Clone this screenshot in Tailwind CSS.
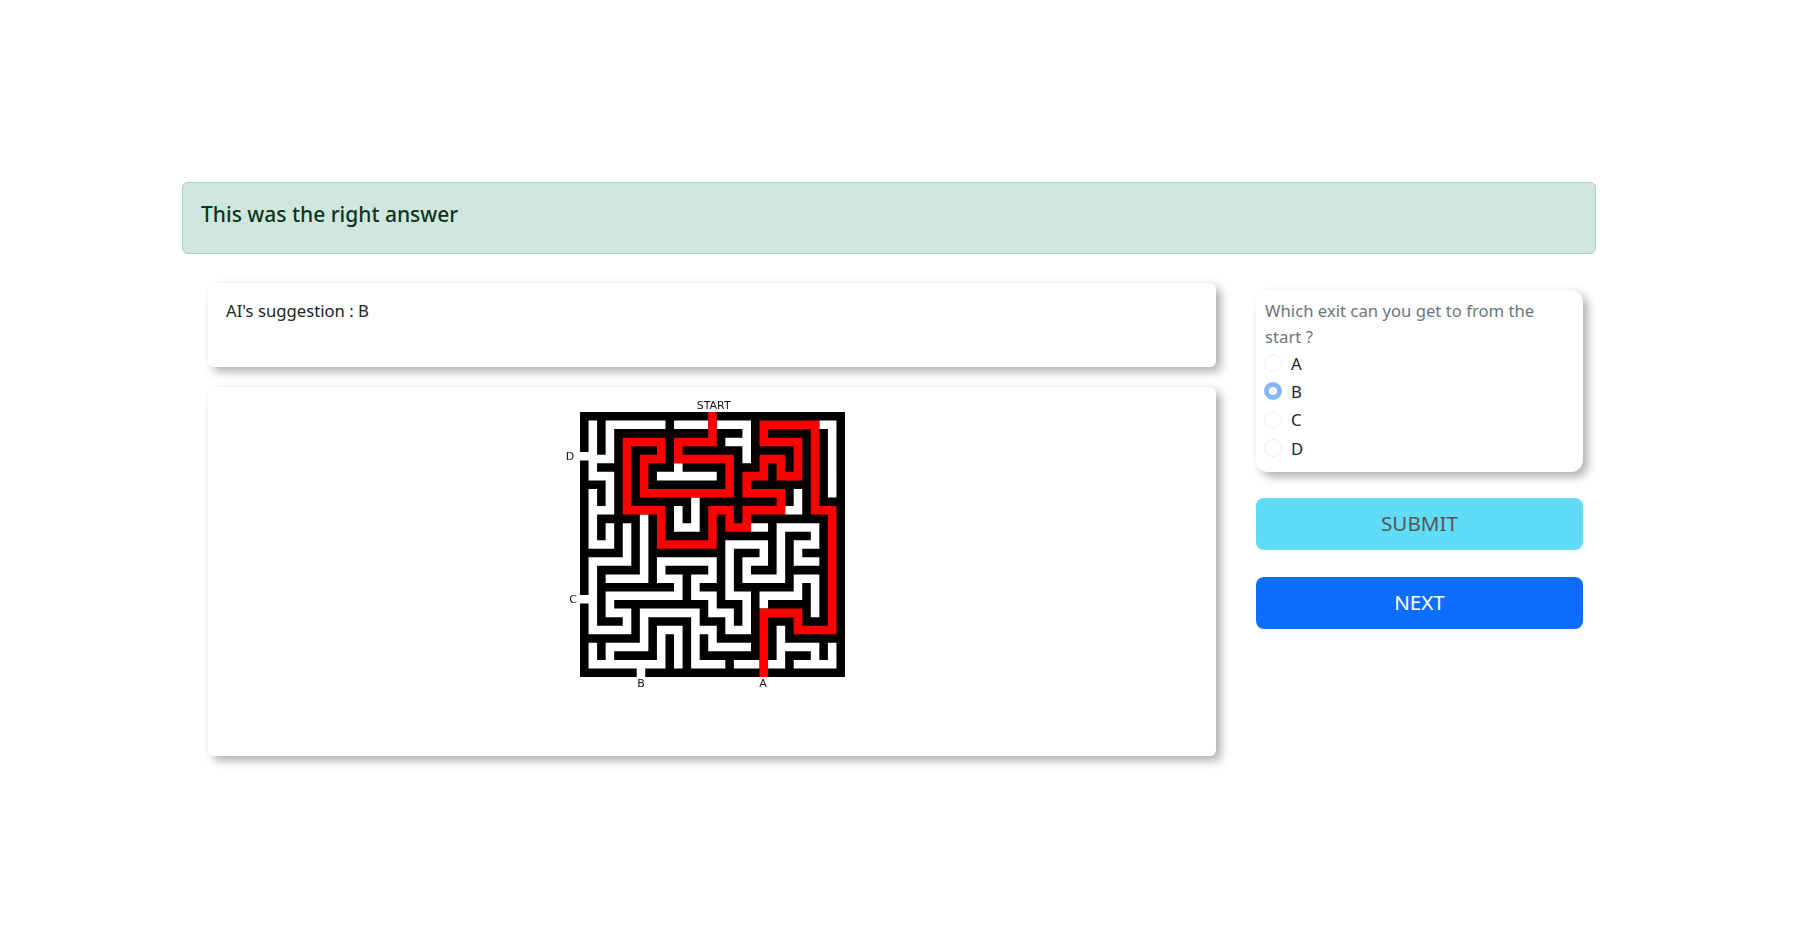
<!DOCTYPE html>
<html lang="en">
<head>
    <meta charset="UTF-8">
    <title>Maze</title>
    <script src="https://cdn.jsdelivr.net/npm/@tailwindcss/browser@4"></script>
</head>
<body class="min-h-screen bg-white font-['Noto_Sans',sans-serif] text-[#212529] text-[16.7px]">

    <div class="w-[1414px] ml-[182px] pt-[182px]">

        <!-- Result -->
        <div class="h-[72px] bg-[#d1e7dd] border border-[#a3cfbb] rounded-[6px] px-[18px] pt-[18px] text-[21px] leading-[26px] font-medium text-[#0a3622]">
            This was the right answer
        </div>

        <div class="flex pl-[26px] pr-[13px]">

            <!-- Left column -->
            <div class="w-[1008px] pt-[29px]">
                <div class="h-[84px] bg-white rounded-[6px] px-[18px] pt-[15px] leading-[26px] shadow-[5px_5px_10px_rgba(0,0,0,0.3),6px_-4px_8px_rgba(0,0,0,0.015)]">
                    AI's suggestion : B
                </div>
                <div class="h-[369px] mt-[20px] bg-white rounded-[6px] pt-[3px] flex justify-center items-start shadow-[5px_5px_10px_rgba(0,0,0,0.3),6px_-4px_8px_rgba(0,0,0,0.015)]">
                    <svg id="maze" class="blur-[0.35px]" width="304" height="300" viewBox="0 0 304 300" font-family="DejaVu Sans" font-size="11" text-anchor="middle" fill="#111"></svg>
                </div>
            </div>

            <!-- Right column -->
            <div class="w-[327px] ml-[40px] pt-[36px]">
                <div class="h-[182px] bg-white rounded-[12px] px-[8px] pt-[8px] shadow-[5px_5px_10px_rgba(0,0,0,0.3),6px_-4px_8px_rgba(0,0,0,0.015)]">
                    <p class="w-[290px] h-[51px] pl-[1px] leading-[26px] text-[#6c757d]">Which exit can you get to from the start ?</p>
                    <label class="h-[28.3px] flex items-center gap-[9px]"><input type="radio" name="exit" disabled class="appearance-none w-[18px] h-[18px] rounded-full border border-[#eceef0]"><span>A</span></label>
                    <label class="h-[28.3px] flex items-center gap-[9px]"><input type="radio" name="exit" disabled checked class="appearance-none w-[18px] h-[18px] rounded-full border-[5px] border-[#86b7fd] bg-white"><span>B</span></label>
                    <label class="h-[28.3px] flex items-center gap-[9px]"><input type="radio" name="exit" disabled class="appearance-none w-[18px] h-[18px] rounded-full border border-[#eceef0]"><span>C</span></label>
                    <label class="h-[28.3px] flex items-center gap-[9px]"><input type="radio" name="exit" disabled class="appearance-none w-[18px] h-[18px] rounded-full border border-[#eceef0]"><span>D</span></label>
                </div>
                <button class="block w-full h-[52px] mt-[26px] pb-[2px] rounded-[8px] bg-[#61dcf7] text-[#555] text-[20.6px]">SUBMIT</button>
                <button class="block w-full h-[52px] mt-[27px] pb-[2px] rounded-[8px] bg-[#0d6efd] text-white text-[20.6px]">NEXT</button>
            </div>
        </div>
    </div>

    <script>
        // Maze grid: # wall, . corridor, r solution path
        const rows = [
            "###############r###############",
            "#.#.......#....r....#rrrrrrr..#",
            "#.#.###########r###.#r#####r#.#",
            "#.#.#rrrrr#rrrrr#...#rrrrr#r#.#",
            "#.#.#r###r#r#######.#####r#r#.#",
            "#...#r#rrr#rrrrrrr#.#rrr#r#r#.#",
            "#.###r#r###.#####r###r#r#r#r#.#",
            "#...#r#r#.......#r#rrr#rrr#r#.#",
            "###.#r#r#########r#r#######r#.#",
            "#.#.#r#rrrrrrrrrrr#rrrrr#.#r#.#",
            "#.#.#r#######.#########r#.#r###",
            "#...#rrrrr#.#.#rrr#rrrrr..#rrr#",
            "#.#####.#r#.#.#r#r#r#########r#",
            "#.#.#.#.#r#...#r#rrr..#.....#r#",
            "#.#.#.#.#r#####r#######.###.#r#",
            "#...#.#.#rrrrrrr#.....#.#...#r#",
            "#####.#.#########.###.#.#.###r#",
            "#.....#.#.......#.#...#.#...#r#",
            "#.#####.#.#####.#.#.###.#####r#",
            "#.#.....#...#...#.#.....#...#r#",
            "#.#########.#.###.#######.#.#r#",
            "#.#.........#...#...#.....#.#r#",
            "#.#.###########.###.#.#####.#r#",
            "#.#...#.......#...#.#rrrrr#.#r#",
            "#.###.#.#####.###.#.#r###r###r#",
            "#.....#.#...#...#...#r#.#rrrrr#",
            "#######.#.#.#.#.#####r#.#######",
            "#.#.....#.#.#.#.....#r#.....#.#",
            "#.#.#####.#.#.#######r#.###.#.#",
            "#.........#.#....#...r..#.....#",
            "#####################r#########"
        ];

        const svg = document.getElementById('maze');
        const NS = 'http://www.w3.org/2000/svg';
        const left = 20, top_ = 22, cell = 265 / 31;

        function addPath(d, fill) {
            const p = document.createElementNS(NS, 'path');
            p.setAttribute('d', d);
            p.setAttribute('fill', fill);
            svg.appendChild(p);
        }

        function box(x, y, w, h) {
            return `M${x} ${y}h${w}v${h}h${-w}z`;
        }

        function addLabel(text, x, y) {
            const t = document.createElementNS(NS, 'text');
            t.setAttribute('x', x);
            t.setAttribute('y', y);
            t.textContent = text;
            svg.appendChild(t);
        }

        addPath(box(left, top_, 265, 265), '#000');

        // one path per colour, so neighbouring rows leave no seam
        function cellsPath(ch) {
            let d = '';
            rows.forEach((row, y) => {
                for (let x = 0; x < row.length; x++) {
                    if (row[x] !== ch) continue;
                    let end = x;
                    while (row[end + 1] === ch) end++;
                    d += box(left + x * cell, top_ + y * cell, (end - x + 1) * cell, cell);
                    x = end;
                }
            });
            return d;
        }

        // exits sit a little off the grid
        const exits = box(20, 62, cell, cell) + box(20, 205, cell, cell) + box(76.7, 278.5, cell, cell);
        addPath(cellsPath('.') + exits, '#ffffff');
        addPath(cellsPath('r'), '#ff0000');

        addLabel('START', 153.7, 19);
        addLabel('D', 10, 70);
        addLabel('C', 13, 213);
        addLabel('B', 81, 297);
        addLabel('A', 203, 297);
    </script>
</body>
</html>
